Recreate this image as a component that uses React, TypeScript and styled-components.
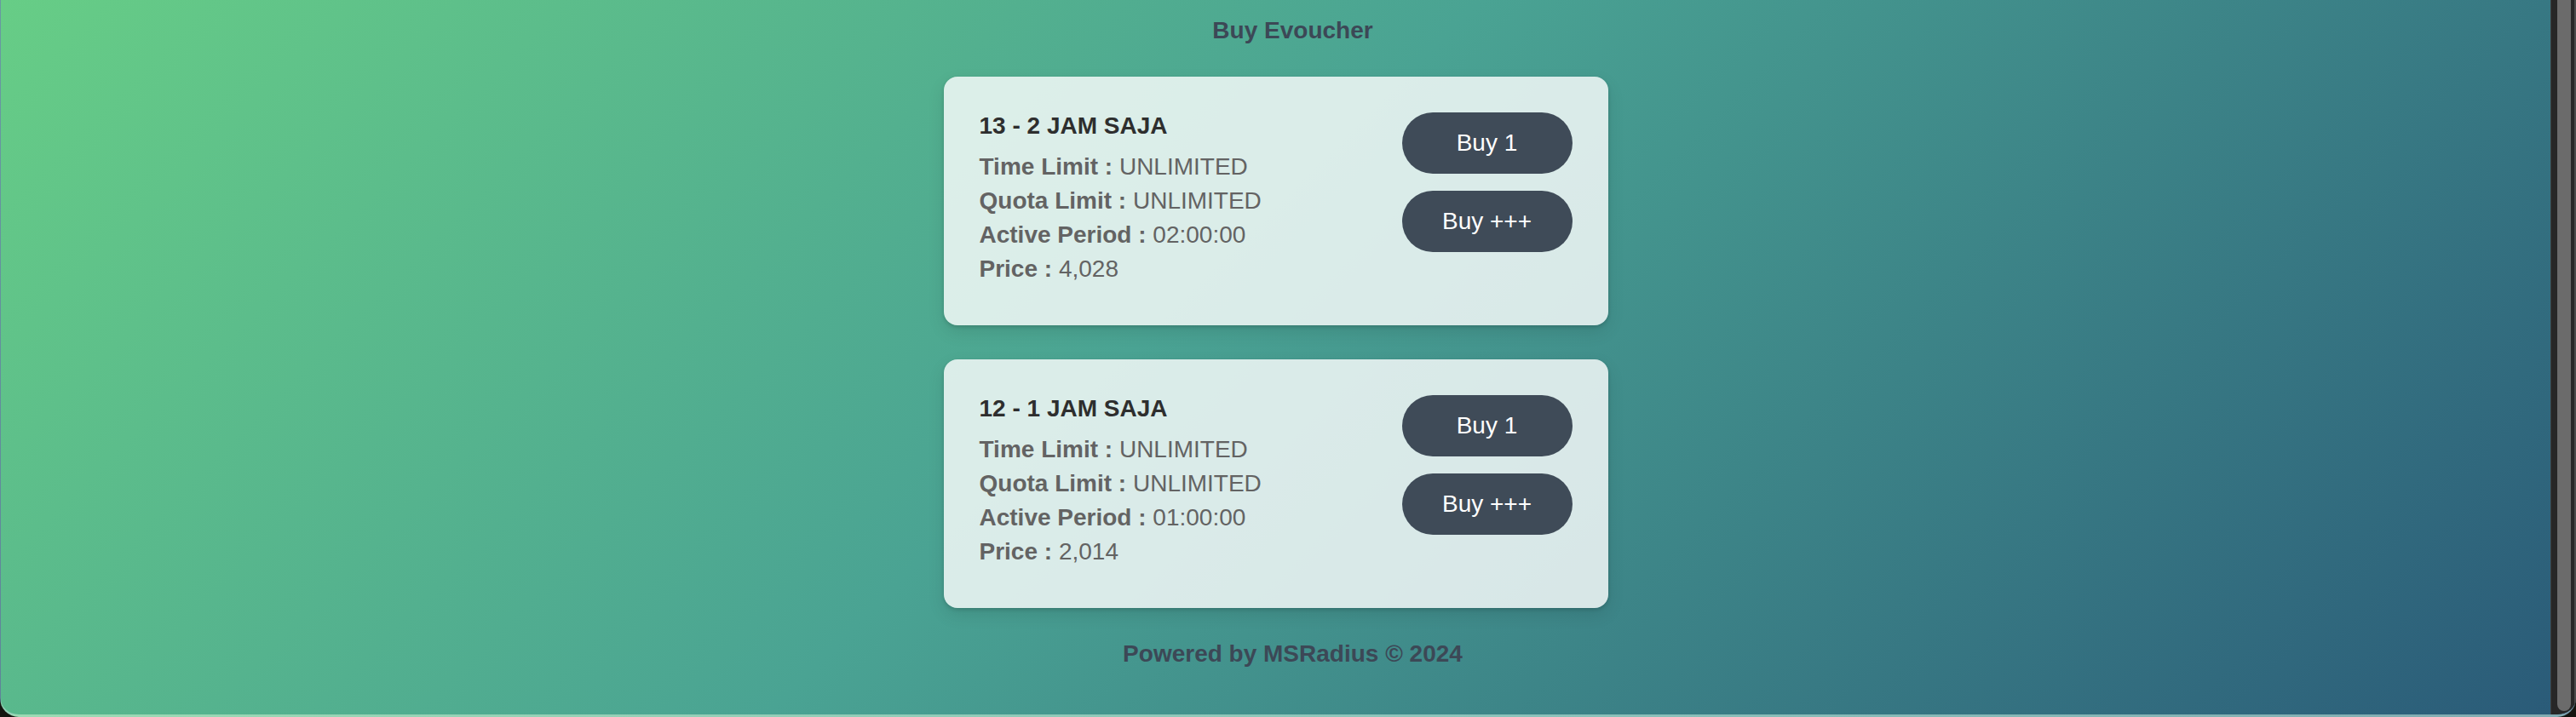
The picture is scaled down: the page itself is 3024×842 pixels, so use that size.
import React from "react";
import styled, { createGlobalStyle } from "styled-components";

const GlobalStyle = createGlobalStyle`
  html, body {
    margin: 0;
    padding: 0;
    background: #14140f;
  }
  body {
    font-family: "Liberation Sans", Arial, Helvetica, sans-serif;
  }
  #root {
    width: 3024px;
    height: 842px;
  }
`;

const Window = styled.div`
  display: flex;
  width: 3024px;
  height: 842px;
  box-sizing: border-box;
  border-radius: 0 0 22px 22px;
  overflow: hidden;
  border-left: 1px solid rgba(255, 255, 255, 0.25);
  border-bottom: 3px solid rgba(220, 235, 235, 0.45);
  background: linear-gradient(135deg, #67cd86 0%, #4aa393 45%, #2a5a78 100%);
`;

const Content = styled.main`
  flex: 1;
  display: flex;
  flex-direction: column;
  align-items: center;
  padding-top: 20px;
  box-sizing: border-box;
`;

const Heading = styled.h1`
  margin: 0;
  padding-left: 40px;
  font-size: 28px;
  line-height: 32px;
  font-weight: 700;
  color: #3c4856;
`;

const CardList = styled.div`
  display: flex;
  flex-direction: column;
  gap: 40px;
  margin-top: 38px;
`;

const Card = styled.section`
  width: 780px;
  box-sizing: border-box;
  padding: 42px;
  display: flex;
  justify-content: space-between;
  align-items: flex-start;
  background: rgba(255, 255, 255, 0.8);
  border-radius: 16px;
  box-shadow: 0 2px 4px rgba(0, 0, 0, 0.14), 0 8px 20px rgba(0, 0, 0, 0.1);
`;

const Details = styled.div`
  display: flex;
  flex-direction: column;
`;

const Title = styled.h2`
  margin: 0 0 16px;
  font-size: 28px;
  line-height: 32px;
  font-weight: 700;
  color: #2e2e2e;
`;

const Row = styled.p`
  margin: 0 0 8px;
  font-size: 28px;
  line-height: 32px;
  color: #636363;
`;

const Label = styled.strong`
  font-weight: 700;
`;

const Actions = styled.div`
  display: flex;
  flex-direction: column;
  gap: 20px;
`;

const BuyButton = styled.button`
  width: 200px;
  height: 72px;
  border: none;
  border-radius: 36px;
  background: #3f4b58;
  color: #ffffff;
  font-family: inherit;
  font-size: 28px;
  cursor: pointer;
  padding: 0;
`;

const Footer = styled.footer`
  margin-top: 38px;
  padding-left: 40px;
  font-size: 28px;
  line-height: 32px;
  font-weight: 700;
  color: #3c4856;
`;

const ScrollTrack = styled.div`
  flex: none;
  width: 30px;
  box-sizing: border-box;
  display: flex;
  background: #272727;
  border-left: 1px solid #3c3c3c;
  border-right: 2px solid #4a4a4a;
  padding: 0 4px 4px 7px;
`;

const ScrollThumb = styled.div`
  width: 16px;
  flex: 1;
  background: #6b6b6b;
  border-radius: 0 0 8px 8px;
`;

type Voucher = {
  name: string;
  time: string;
  quota: string;
  period: string;
  price: string;
};

const vouchers: Voucher[] = [
  { name: "13 - 2 JAM SAJA", time: "UNLIMITED", quota: "UNLIMITED", period: "02:00:00", price: "4,028" },
  { name: "12 - 1 JAM SAJA", time: "UNLIMITED", quota: "UNLIMITED", period: "01:00:00", price: "2,014" },
];

export default function App() {
  return (
    <>
      <GlobalStyle />
      <Window>
        <Content>
          <Heading>Buy Evoucher</Heading>
          <CardList>
            {vouchers.map((v) => (
              <Card key={v.name}>
                <Details>
                  <Title>{v.name}</Title>
                  <Row>
                    <Label>Time Limit :</Label> {v.time}
                  </Row>
                  <Row>
                    <Label>Quota Limit :</Label> {v.quota}
                  </Row>
                  <Row>
                    <Label>Active Period :</Label> {v.period}
                  </Row>
                  <Row>
                    <Label>Price :</Label> {v.price}
                  </Row>
                </Details>
                <Actions>
                  <BuyButton>Buy 1</BuyButton>
                  <BuyButton>Buy +++</BuyButton>
                </Actions>
              </Card>
            ))}
          </CardList>
          <Footer>Powered by MSRadius © 2024</Footer>
        </Content>
        <ScrollTrack>
          <ScrollThumb />
        </ScrollTrack>
      </Window>
    </>
  );
}
